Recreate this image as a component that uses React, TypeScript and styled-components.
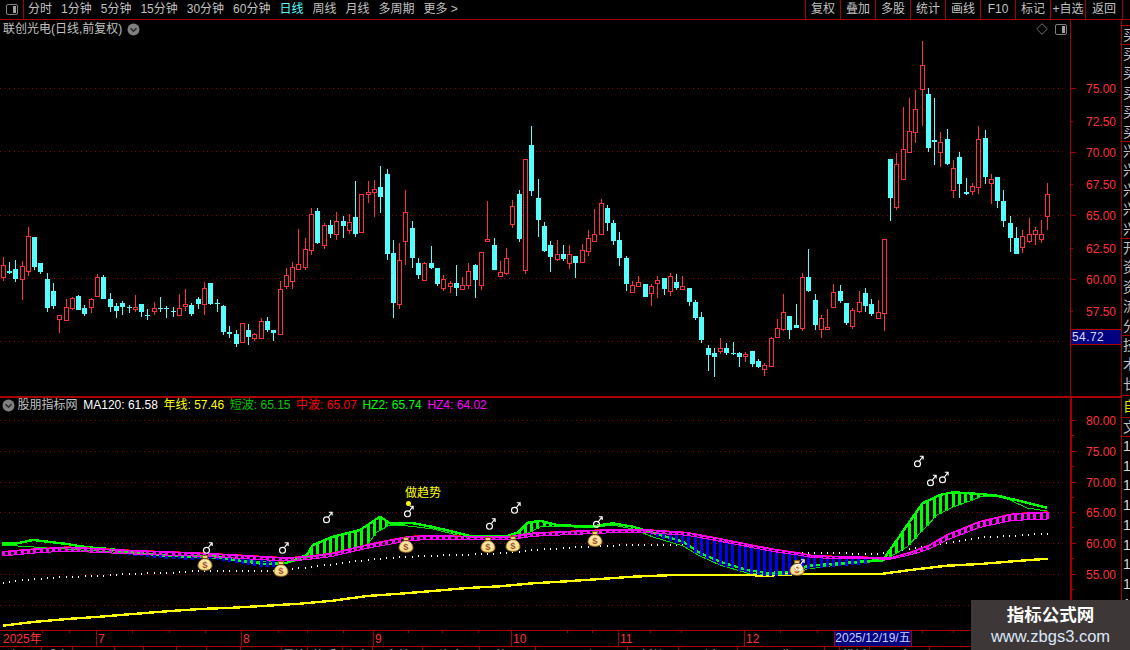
import React from "react";
import styled, { createGlobalStyle } from "styled-components";

const LINE = "#a80000";
const GRID = "#8c0000";
const LABEL = "#ff3232";
const CYAN = "#54ffff";
const GREY = "#c0c0c0";

type Pt = [number, number];
type Raw = [number, number, number, number, number, "r" | "c"];

const regionA: Raw[] = [
  [10,141,166,200,212,"r"],[28,156,183,188,192,"c"],[46,150,178,206,216,"c"],[67,153,169,206,270,"r"],[85,51,79,182,197,"r"],[103,81,81,170,180,"c"],[121,159,159,185,192,"c"],[142,189,207,293,305,"c"],[160,219,243,287,297,"c"],[178,316,316,326,369,"r"],[199,267,292,329,329,"r"],[217,262,265,293,299,"r"],[235,255,258,300,300,"c"],[253,285,294,312,318,"c"],[274,264,268,290,309,"r"],[292,192,202,257,257,"r"],[310,195,201,267,267,"c"],[331,249,267,291,305,"c"],[349,279,288,303,324,"c"],[367,273,279,291,315,"c"],[388,285,291,293,309,"c"],[406,255,292,297,305,"r"],[424,282,282,306,321,"c"],[442,297,314,316,330,"c"],[463,276,295,302,315,"r"],[481,261,294,297,306,"c"],[499,288,295,297,324,"c"],[520,291,303,305,321,"c"],[538,252,295,314,314,"r"],[556,237,282,288,303,"r"],[574,279,285,312,318,"c"],[595,261,267,282,297,"c"],[613,216,235,281,315,"r"],[631,219,219,282,285,"c"],[652,267,279,281,306,"c"],[670,285,288,366,375,"c"],[688,348,366,372,384,"c"],[709,360,372,402,411,"c"],[727,339,340,395,399,"r"],[745,342,360,381,405,"c"],[763,369,373,384,393,"r"],[784,324,334,384,384,"r"],[802,321,333,360,366,"c"],[820,360,360,369,393,"c"],[841,213,238,371,371,"r"],[859,174,196,227,237,"r"],[877,156,172,212,237,"r"],[895,57,163,177,180,"r"],[916,84,118,170,180,"r"],[934,-5,12,119,135,"r"],[952,-5,3,99,102,"c"],[973,40,46,104,117,"r"],[991,30,45,72,84,"c"],[1009,6,34,71,90,"r"],[1030,18,33,48,84,"c"],[1048,12,36,60,72,"r"],
];
const regionB: Raw[] = [
  [16,183,291,342,351,"c"],[34,223,223,335,335,"r"],[55,183,217,221,249,"r"],[73,180,208,215,291,"r"],[91,138,201,231,279,"c"],[112,147,162,402,420,"c"],[130,360,399,549,594,"c"],[148,369,421,551,567,"r"],[166,210,277,362,435,"r"],[187,303,324,414,444,"c"],[205,415,429,465,477,"c"],[223,426,430,480,483,"r"],[244,378,429,444,447,"c"],[262,444,444,492,498,"c"],[280,465,478,503,513,"r"],[301,483,490,497,519,"r"],[319,435,489,504,528,"c"],[337,471,496,507,510,"r"],[355,430,454,494,507,"r"],[376,432,435,480,534,"c"],[394,396,397,494,510,"r"],[412,243,357,362,362,"r"],[433,354,375,450,450,"c"],[451,423,457,467,471,"r"],[469,384,415,459,465,"r"],[487,240,259,311,324,"r"],[508,210,222,357,366,"c"],[526,118,118,451,462,"r"],[544,18,75,213,228,"c"],[565,178,234,300,351,"c"],[583,306,318,393,396,"c"],[601,363,375,411,456,"c"],[622,360,403,416,423,"r"],[640,375,402,417,423,"c"],[658,375,403,429,447,"r"],[676,408,408,429,474,"c"],[697,372,391,425,425,"r"],[715,330,355,392,408,"r"],[733,267,343,362,362,"r"],[754,237,250,341,341,"r"],[772,255,264,309,333,"c"],[790,300,309,363,375,"c"],[808,336,360,414,438,"c"],[829,408,414,492,513,"c"],[847,483,496,516,519,"r"],[865,468,487,498,501,"r"],[886,492,492,531,531,"c"],[904,492,498,518,558,"r"],[922,468,480,488,534,"r"],[943,474,474,507,525,"c"],[961,459,469,513,528,"r"],[979,462,486,504,510,"c"],[997,468,499,507,510,"r"],[1018,504,504,546,558,"c"],[1036,540,546,594,600,"c"],
];
const regionC: Raw[] = [
  [35,336,351,420,429,"c"],[55,435,444,465,513,"c"],[73,444,459,471,531,"c"],[91,414,445,453,462,"r"],[109,429,444,459,465,"c"],[130,426,459,463,465,"c"],[148,456,459,471,501,"c"],[166,456,462,468,486,"r"],[187,453,453,492,501,"c"],[205,477,483,501,504,"c"],[223,489,496,507,528,"r"],[244,411,415,497,497,"r"],[262,357,385,410,414,"r"],[280,282,337,387,393,"r"],[298,348,348,390,417,"c"],[319,312,375,384,384,"c"],[337,219,232,383,393,"r"],[355,147,231,273,276,"c"],[376,282,300,375,390,"c"],[394,345,355,386,414,"r"],[412,327,381,386,386,"r"],[430,252,277,320,320,"r"],[451,255,273,303,309,"c"],[469,309,309,369,375,"c"],[487,324,331,377,387,"r"],[508,273,307,332,339,"r"],[526,264,279,318,336,"c"],[544,297,312,342,348,"c"],[565,300,337,353,353,"r"],[583,117,118,338,393,"r"],
];
const regionD: Raw[] = [
  [61,387,387,504,573,"c"],[79,369,403,530,540,"r"],[100,231,358,446,450,"r"],[118,205,304,365,365,"r"],[136,180,238,305,339,"r"],[157,33,106,176,288,"r"],[175,175,192,354,366,"c"],[193,205,330,335,405,"c"],[211,306,337,365,411,"r"],[232,297,327,402,405,"c"],[250,390,415,479,504,"r"],[268,366,381,462,504,"c"],[289,444,486,492,495,"c"],[307,459,469,483,495,"r"],[325,288,328,470,492,"r"],[346,300,324,441,462,"c"],[364,432,448,458,522,"r"],[382,441,441,513,534,"c"],[400,480,513,573,591,"c"],[421,558,579,624,666,"c"],[439,591,624,672,672,"c"],[457,600,619,651,669,"r"],[478,564,613,633,639,"r"],[496,591,601,611,645,"r"],[514,570,613,627,639,"r"],[532,459,493,557,600,"r"],
];

type Candle = { x: number; hi: number; top: number; bot: number; lo: number; up: boolean };
const toCandles = (raw: Raw[], ox: number, oy: number): Candle[] =>
  raw.map(([zx, h, t, b, l, c]) => ({
    x: Math.floor(ox + zx / 3),
    hi: Math.round(oy + h / 3),
    top: Math.round(oy + t / 3),
    bot: Math.round(oy + b / 3),
    lo: Math.round(oy + l / 3),
    up: c === "r",
  }));
const candles = [
  ...toCandles(regionA, 0, 210),
  ...toCandles(regionB, 350, 120),
  ...toCandles(regionC, 690, 200),
  ...toCandles(regionD, 870, 30),
];

const GREEN_TOP: Pt[] = [[2,543.7],[17,543.3],[33,540],[50,542],[67,544],[87,547.3],[110,549],[133,552.7],[167,555.7],[187,556.7],[213,555.7],[233,560],[267,564.3],[287,562.7],[307,555],[313,545],[333,536.7],[360,530],[380,516.7],[390,523.3],[400,523.5],[412,523],[433,527],[457,532.7],[470,536],[507,536],[518,532.7],[528,522.7],[540,520.7],[557,525],[590,526.7],[613,523.3],[633,526.7],[653,533],[683,541.7],[700,553],[720,561.7],[747,570],[767,573],[797,571.7],[807,566],[830,564],[857,561.7],[883,560],[897,540],[913,516.7],[923,503],[940,495],[953,492.3],[980,494],[997,495.7],[1020,501],[1047,507.7]];
const GREEN_LOW: Pt[] = [[2,545],[287,563],[307,558],[333,553],[367,545],[377,532],[390,525],[400,525],[433,529],[457,535],[470,538],[507,536],[518,535],[528,533],[540,527],[557,526],[590,528],[613,525],[633,529],[653,537],[683,546],[700,556],[720,565],[747,573],[767,575],[797,574],[807,569],[830,566],[857,563],[883,561],[907,547],[923,530],[937,515],[953,507],[970,501],[980,497],[997,496],[1010,500],[1027,508],[1047,511]];
const MAGENTA: Pt[] = [[2,552],[33,549.3],[67,547.3],[100,549],[133,550.7],[167,552],[200,553.3],[233,555],[267,557],[287,558],[307,556.7],[333,553.3],[367,545],[400,538.3],[410,536.7],[433,535.7],[467,536.7],[510,536.7],[533,533.3],[567,531.7],[607,530],[647,530],[687,532.7],[717,538.3],[750,545],[777,550],[800,553.3],[813,556],[863,557.3],[890,558.3],[913,551.7],[930,545],[947,535],[980,521.7],[1013,514],[1048,512.3]];
const BAND: Pt[] = [[0,4],[200,3],[350,3],[400,4],[470,3],[600,3],[800,2],[890,1],[950,5],[1048,7]];
const YELLOW: Pt[] = [[3,625.7],[33,622],[67,619],[100,616.7],[133,614],[167,611.3],[200,609],[233,607.7],[267,605.7],[300,603.7],[333,600.7],[367,596],[400,593.7],[433,591],[467,588],[500,586.3],[533,583.3],[567,581.3],[600,579],[633,576.7],[667,575.3],[700,575],[745,575],[767,575.7],[797,574],[833,574.3],[883,573.7],[913,569.7],[947,565.7],[980,564],[1013,561.3],[1048,558.7]];
const DOTS: Pt[] = [[2,581.7],[33,578],[67,576],[100,574.7],[133,572.7],[167,572],[200,570],[233,570],[267,570],[300,567.3],[333,563.3],[367,558.7],[400,556],[433,554.7],[480,553.3],[510,551.7],[523,550],[567,546.7],[607,544.7],[640,544],[683,544],[780,552],[880,552.7],[913,547.3],[947,541.7],[980,536.7],[1013,534.7],[1047,532.7]];
const BAGS: Pt[] = [[205,563],[281,569],[406,545],[488,545],[513,544],[595,539],[797,568]];
const MARS: Pt[] = [[208,548],[284,548],[328,517.5],[409,511.5],[491,524],[516,508],[598,522],[800,565],[919,461.5],[932,480.5],[944,477.5]];

const at = (pts: Pt[], x: number) => {
  if (x <= pts[0][0]) return pts[0][1];
  for (let i = 1; i < pts.length; i++) {
    if (x <= pts[i][0]) {
      const [x0, y0] = pts[i - 1];
      const [x1, y1] = pts[i];
      return y0 + ((y1 - y0) * (x - x0)) / (x1 - x0);
    }
  }
  return pts[pts.length - 1][1];
};
const BAR_X = Array.from({ length: 167 }, (_, i) => Math.floor(3.3 + 6.29 * i));
const path = (pts: Pt[]) => pts.map(([x, y]) => `${x},${y}`).join(" ");
const bandLow = (x: number) => at(MAGENTA, x) + at(BAND, x);
const MAGENTA_LOW: Pt[] = BAR_X.map((x) => [x, bandLow(x)]);
const inRange = (x: number, r: number[][]) => r.some(([a, b]) => x >= a && x <= b);

const Global = createGlobalStyle`
  html, body { margin: 0; padding: 0; background: #000; }
  body { font-family: "Liberation Sans", "Noto Sans CJK SC", sans-serif; font-size: 12px; color: ${GREY}; }
`;
const Screen = styled.div`
  position: relative;
  width: 1130px;
  height: 650px;
  overflow: hidden;
  background: #000;
  display: flex;
  flex-direction: column;
`;
const Toolbar = styled.div`
  height: 19px;
  border-bottom: 1px solid ${LINE};
  display: flex;
  align-items: center;
  flex: none;
`;
const ToggleCell = styled.div`
  width: 23px;
  height: 19px;
  border-right: 1px solid ${LINE};
  display: flex;
  align-items: center;
  justify-content: center;
  flex: none;
`;
const Periods = styled.div`
  display: flex;
  gap: 9px;
  padding-left: 4px;
  flex: 1;
`;
const Period = styled.span<{ $active?: boolean }>`
  color: ${(p) => (p.$active ? CYAN : GREY)};
  line-height: 19px;
  white-space: nowrap;
`;
const ToolCell = styled.div<{ $w?: number }>`
  width: ${(p) => p.$w ?? 35}px;
  box-sizing: border-box;
  height: 19px;
  border-left: 1px solid ${LINE};
  line-height: 18px;
  text-align: center;
  white-space: nowrap;
  overflow: hidden;
  flex: none;
`;
const ToolEnd = styled.div`
  width: 8px;
  height: 19px;
  border-left: 1px solid ${LINE};
  box-sizing: border-box;
  flex: none;
`;
const Body = styled.div`
  flex: 1;
  display: flex;
  min-height: 0;
`;
const Charts = styled.div`
  width: 1121px;
  flex: none;
  display: flex;
  flex-direction: column;
`;
const Pane = styled.div<{ $h: number; $thick?: boolean }>`
  position: relative;
  height: ${(p) => p.$h}px;
  display: flex;
  flex: none;
  border-bottom: ${(p) => (p.$thick ? `2px solid ${LINE}` : "none")};
`;
const Plot = styled.svg`
  display: block;
  width: 1070px;
  height: 100%;
  flex: none;
`;
const AxisBox = styled.div<{ $b: number }>`
  width: ${(p) => 51 - p.$b}px;
  border-left: ${(p) => p.$b}px solid ${LINE};
  flex: none;
`;
const AxisSvg = styled.svg`
  display: block;
  width: 100%;
  height: 100%;
  font-family: "Liberation Sans", sans-serif;
  font-size: 12px;
`;
const PaneTitle = styled.div`
  position: absolute;
  left: 3px;
  top: 2px;
  display: flex;
  align-items: center;
  gap: 5px;
  line-height: 14px;
`;
const CornerIcons = styled.div`
  position: absolute;
  left: 1036px;
  top: 3px;
  display: flex;
  align-items: center;
  gap: 7px;
`;
const IndicatorTitle = styled.div`
  position: absolute;
  left: 2px;
  top: 0px;
  display: flex;
  align-items: center;
  gap: 5.6px;
  line-height: 14px;
  white-space: nowrap;
`;
const TitleName = styled.span`
  margin-left: -3px;
`;
const Value = styled.span<{ $c: string }>`
  color: ${(p) => p.$c};
`;
const PriceTag = styled.div`
  position: absolute;
  left: 1071px;
  top: 309px;
  width: 50px;
  height: 16px;
  box-sizing: border-box;
  background: #000080;
  border-top: 1px solid ${LINE};
  border-bottom: 1px solid ${LINE};
  color: #d8d8ff;
  line-height: 14px;
  padding-left: 1px;
  letter-spacing: 0.4px;
`;
const TimeAxis = styled.div`
  position: relative;
  height: 15px;
  flex: none;
  display: flex;
  border-top: 1px solid ${LINE};
  border-bottom: 1px solid ${LINE};
`;
const TimeCell = styled.div<{ $w: number; $first?: boolean }>`
  width: ${(p) => p.$w}px;
  box-sizing: border-box;
  flex: none;
  border-left: ${(p) => (p.$first ? "none" : `1px solid ${LINE}`)};
  padding-left: ${(p) => (p.$first ? 3 : 1)}px;
  color: ${LABEL};
  line-height: 16px;
`;
const DateCell = styled.div`
  width: 78px;
  box-sizing: border-box;
  flex: none;
  background: #000080;
  border: 1px solid ${LINE};
  border-top: none;
  border-bottom: none;
  color: #c4d0ff;
  text-align: center;
  line-height: 15px;
  white-space: nowrap;
`;
const TickOverlay = styled.svg`
  position: absolute;
  left: 0;
  top: 0;
  width: 1121px;
  height: 3px;
`;
const TabRow = styled.div`
  flex: 1;
  display: flex;
  overflow: hidden;
`;
const Tab = styled.div<{ $w: number; $c?: string }>`
  width: ${(p) => p.$w}px;
  box-sizing: border-box;
  flex: none;
  height: 20px;
  border-right: 1px solid ${LINE};
  color: ${(p) => p.$c ?? GREY};
  text-align: center;
  line-height: 18px;
  white-space: nowrap;
  overflow: hidden;
`;
const Strip = styled.div`
  flex: 1;
  border-left: 1px solid ${LINE};
  overflow: hidden;
  display: flex;
  flex-direction: column;
`;
const StripBlock = styled.div<{ $h: number }>`
  height: ${(p) => p.$h}px;
  flex: none;
  box-sizing: border-box;
  border-bottom: 1px solid ${LINE};
  padding-left: 1px;
  width: 9px;
  overflow: hidden;
`;
const StripText = styled.div<{ $c?: string; $lh: number }>`
  width: 14px;
  font-size: 14px;
  line-height: ${(p) => p.$lh}px;
  color: ${(p) => p.$c ?? GREY};
  word-break: break-all;
`;
const StripDigits = styled.div`
  flex: 1;
  padding-left: 1px;
  color: #d8d8d8;
  font-size: 14px;
  line-height: 19.7px;
  overflow: hidden;
`;
const Watermark = styled.div`
  position: absolute;
  left: 971px;
  top: 600px;
  width: 159px;
  height: 50px;
  background: #3d3737;
  display: flex;
  flex-direction: column;
  align-items: center;
  padding-top: 6px;
  box-sizing: border-box;
`;
const MarkTitle = styled.div`
  color: #fff;
  font-size: 17.5px;
  font-weight: 700;
  line-height: 19px;
`;
const MarkUrl = styled.div`
  color: #dce7f7;
  font-size: 16.5px;
  line-height: 20px;
  margin-top: 1px;
`;

const Chevron: React.FC = () => (
  <svg width="13" height="13" viewBox="0 0 13 13">
    <circle cx="6.5" cy="6.5" r="6" fill="#808080" />
    <path d="M3.5 5.2 L6.5 8.2 L9.5 5.2" fill="none" stroke="#2a2a2a" strokeWidth="1.6" />
  </svg>
);
const PanelToggle: React.FC = () => (
  <svg width="12" height="11" viewBox="0 0 12 11">
    <rect x="0.5" y="0.5" width="11" height="10" rx="1.5" fill="none" stroke="#808080" />
    <rect x="7" y="2" width="3" height="7" fill="#a0a0a0" />
  </svg>
);
const Diamond: React.FC = () => (
  <svg width="12" height="12" viewBox="0 0 12 12">
    <path d="M6 0.7 L11.3 6 L6 11.3 L0.7 6 Z" fill="none" stroke="#707070" />
  </svg>
);

const CandleMark: React.FC<{ c: Candle }> = ({ c }) => {
  const col = c.up ? LABEL : CYAN;
  const wick = c.x + 0.5;
  return (
    <g>
      <line x1={wick} x2={wick} y1={c.hi} y2={c.top} stroke={col} />
      <line x1={wick} x2={wick} y1={c.bot} y2={c.lo} stroke={col} />
      {c.up ? (
        <rect x={c.x - 2 + 0.5} y={c.top + 0.5} width={4} height={Math.max(c.bot - c.top, 1)} fill="#000" stroke={col} />
      ) : (
        <rect x={c.x - 2} y={c.top} width={5} height={Math.max(c.bot - c.top, 1)} fill={col} />
      )}
    </g>
  );
};

const MoneyBag: React.FC<{ x: number; y: number }> = ({ x, y }) => (
  <g transform={`translate(${x} ${y})`} shapeRendering="auto">
    <path
      d="M-3 -7.5 L3 -7.5 L2 -4.2 C6 -2.5 7.4 1 7 3.6 C6.6 6.6 3 7.4 0 7.4 C-3 7.4 -6.6 6.6 -7 3.6 C-7.4 1 -6 -2.5 -2 -4.2 Z"
      fill="url(#bag)"
      stroke="#8a5a10"
      strokeWidth="0.9"
    />
    <line x1="-2.4" x2="2.4" y1="-4.4" y2="-4.4" stroke="#7a3a10" strokeWidth="1.1" />
    <text y="4.6" textAnchor="middle" fontSize="9.5" fontWeight="700" fontFamily="Liberation Sans, sans-serif" fill="#a8501a">
      $
    </text>
  </g>
);
const Mars: React.FC<{ x: number; y: number }> = ({ x, y }) => (
  <g transform={`translate(${x} ${y}) scale(1.15)`} fill="none" stroke="#fff" shapeRendering="auto" strokeWidth="1">
    <circle cx="-1.3" cy="2" r="2.6" />
    <path d="M0.3 -0.2 L3.4 -4.4 M0.7 -4.6 L3.6 -4.6 L3.6 -1.8" />
  </g>
);

const priceGrid = [88.5, 151.5, 215.5, 278.5, 341.5];
const priceLabels: [string, number, boolean][] = [
  ["75.00", 88, true], ["72.50", 121, false], ["70.00", 152, true], ["67.50", 184, false], ["65.00", 215, true], ["62.50", 248, false], ["60.00", 279, true], ["57.50", 311, false],
];
const subGrid = [420.5, 451.5, 482.5, 512.5, 543.5, 574.5, 605.5];
const subLabels: [string, number][] = [["80.00", 420], ["75.00", 451], ["70.00", 482], ["65.00", 512], ["60.00", 543], ["55.00", 574]];
const timeTicks = [42, 69, 132, 169, 205, 278, 307, 343, 408, 442, 478, 567, 592, 650, 681, 780, 817, 922, 953];
const tabs: [number, string?, string?][] = [
  [42, "主图"], [31, "成交"], [42, "MACD"], [29, "KDJ"], [33, "RSI"], [30, "WR"], [34, "BOLL"], [41, "DMI"], [26, "量比"], [35, "换手"], [30, "主力"], [50, "大单"], [57, "资金"], [56, "筹码"], [92, "两融"], [51, "板块"], [59, "形态"], [87, "公告"], [15, "", undefined], [30, "模板", "#a0e8f0"], [60, "更多"],
];

export default function App() {
  const greenRanges = [[287, 392], [515, 600], [885, 997]];
  const blueRanges = [[115, 274], [650, 870]];
  const redLine: Pt[] = MAGENTA.map(([x, y]) => [x, y - 0.5]);
  return (
    <Screen>
      <Global />
      <Toolbar>
        <ToggleCell>
          <PanelToggle />
        </ToggleCell>
        <Periods>
          {["分时", "1分钟", "5分钟", "15分钟", "30分钟", "60分钟"].map((t) => (
            <Period key={t}>{t}</Period>
          ))}
          <Period $active>日线</Period>
          {["周线", "月线", "多周期", "更多 >"].map((t) => (
            <Period key={t}>{t}</Period>
          ))}
        </Periods>
        {["复权", "叠加", "多股", "统计", "画线", "F10", "标记", "+自选"].map((t) => (
          <ToolCell key={t}>{t}</ToolCell>
        ))}
        <ToolCell $w={37}>返回</ToolCell>
        <ToolEnd />
      </Toolbar>
      <Body>
        <Charts>
          <Pane $h={376} $thick>
            <Plot viewBox="0 20 1070 376" shapeRendering="crispEdges">
              {priceGrid.map((y) => (
                <line key={y} x1="0" x2="1067" y1={y} y2={y} stroke={GRID} strokeDasharray="1 3.5" />
              ))}
              {candles.map((c, i) => (
                <CandleMark key={i} c={c} />
              ))}
            </Plot>
            <AxisBox $b={1}>
              <AxisSvg viewBox="1071 20 50 376">
                {priceLabels.map(([t, y, major]) => (
                  <g key={t}>
                    <line x1="1071" x2={major ? 1076 : 1073} y1={y + 0.5} y2={y + 0.5} stroke={LINE} />
                    <text x="1086" y={y + 4.5} fill={LABEL}>{t}</text>
                  </g>
                ))}
              </AxisSvg>
            </AxisBox>
            <PaneTitle>
              <span>联创光电(日线,前复权)</span>
              <Chevron />
            </PaneTitle>
            <CornerIcons>
              <Diamond />
              <PanelToggle />
            </CornerIcons>
            <PriceTag>54.72</PriceTag>
          </Pane>
          <Pane $h={232}>
            <Plot viewBox="0 398 1070 232" shapeRendering="crispEdges">
              <defs>
                <radialGradient id="bag" cx="50%" cy="55%" r="60%">
                  <stop offset="0%" stopColor="#fff6c8" />
                  <stop offset="70%" stopColor="#f5dc8a" />
                  <stop offset="100%" stopColor="#d8a040" />
                </radialGradient>
              </defs>
              {subGrid.map((y) => (
                <line key={y} x1="0" x2="1067" y1={y} y2={y} stroke={GRID} strokeDasharray="1 3.5" />
              ))}
              <polyline points={path(YELLOW)} fill="none" stroke="#ffff00" strokeWidth="2.4" />
              {BAR_X.map((x) => (
                <rect key={x} x={x} y={Math.round(at(DOTS, x))} width="1" height="2" fill="#fff" />
              ))}
              {BAR_X.filter((x) => inRange(x, greenRanges)).map((x) => (
                <rect key={x} x={x - 1} y={at(GREEN_TOP, x)} width="3" height={Math.max(at(GREEN_LOW, x) - at(GREEN_TOP, x), 0)} fill="#00ff00" />
              ))}
              <polyline points={path(GREEN_LOW)} fill="none" stroke="#00e000" strokeWidth="1" />
              <polyline points={path(GREEN_TOP)} fill="none" stroke="#00ff00" strokeWidth="2.4" />
              {BAR_X.filter((x) => inRange(x, blueRanges)).map((x) => (
                <rect key={x} x={x - 1} y={at(MAGENTA, x)} width="3" height={Math.max(at(GREEN_TOP, x) + 3 - at(MAGENTA, x), 1)} fill="#0000ff" />
              ))}
              <polyline points={path(redLine)} fill="none" stroke="#ff0000" strokeWidth="1" />
              {BAR_X.map((x) => (
                <rect key={x} x={x - 1} y={at(MAGENTA, x)} width="3" height={at(BAND, x)} fill="#ff00ff" />
              ))}
              <polyline points={path(MAGENTA)} fill="none" stroke="#ff00ff" strokeWidth="1.6" />
              <polyline points={path(MAGENTA_LOW)} fill="none" stroke="#ff00ff" strokeWidth="1" />
              {BAGS.map(([x, y]) => (
                <MoneyBag key={x} x={x} y={y} />
              ))}
              {MARS.map(([x, y]) => (
                <Mars key={x} x={x} y={y} />
              ))}
              <circle cx="408.5" cy="503.5" r="2.5" fill="#ffff00" shapeRendering="auto" />
              <text x="405" y="497" fontSize="12" fill="#ffff00" fontFamily="Noto Sans CJK SC, sans-serif">做趋势</text>
            </Plot>
            <AxisBox $b={2}>
              <AxisSvg viewBox="1072 398 49 232">
                {subLabels.map(([t, y]) => (
                  <g key={t}>
                    <line x1="1072" x2="1076" y1={y + 0.5} y2={y + 0.5} stroke={LINE} />
                    <line x1="1072" x2="1074" y1={y + 15.5} y2={y + 15.5} stroke={LINE} />
                    <text x="1086" y={y + 4.5} fill={LABEL}>{t}</text>
                  </g>
                ))}
              </AxisSvg>
            </AxisBox>
            <IndicatorTitle>
              <Chevron />
              <TitleName>股朋指标网</TitleName>
              <Value $c="#fff">MA120: 61.58</Value>
              <Value $c="#ffff00">年线: 57.46</Value>
              <Value $c="#00c800">短波: 65.15</Value>
              <Value $c="#ff0000">中波: 65.07</Value>
              <Value $c="#00ff00">HZ2: 65.74</Value>
              <Value $c="#ff00ff">HZ4: 64.02</Value>
            </IndicatorTitle>
          </Pane>
          <TimeAxis>
            <TimeCell $w={96} $first>2025年</TimeCell>
            <TimeCell $w={145}>7</TimeCell>
            <TimeCell $w={132}>8</TimeCell>
            <TimeCell $w={138}>9</TimeCell>
            <TimeCell $w={107}>10</TimeCell>
            <TimeCell $w={126}>11</TimeCell>
            <TimeCell $w={90}>12</TimeCell>
            <DateCell>2025/12/19/五</DateCell>
            <TickOverlay viewBox="0 0 1121 3" shapeRendering="crispEdges">
              {timeTicks.map((x) => (
                <line key={x} x1={x + 0.5} x2={x + 0.5} y1="0" y2="2" stroke={LINE} />
              ))}
            </TickOverlay>
          </TimeAxis>
          <TabRow>
            {tabs.map(([w, t, c], i) => (
              <Tab key={i} $w={w} $c={c}>{t}</Tab>
            ))}
          </TabRow>
        </Charts>
        <Strip>
          <StripBlock $h={6} />
          <StripBlock $h={19}>
            <StripText $lh={19}>买</StripText>
          </StripBlock>
          <StripBlock $h={97}>
            <StripText $lh={19.4}>买买买买买</StripText>
          </StripBlock>
          <StripBlock $h={97}>
            <StripText $lh={19.4}>兴兴兴兴兴</StripText>
          </StripBlock>
          <StripBlock $h={97}>
            <StripText $lh={19.4}>开资资流分</StripText>
          </StripBlock>
          <StripBlock $h={60}>
            <StripText $lh={19.4}>技术长</StripText>
          </StripBlock>
          <StripBlock $h={22}>
            <StripText $lh={20} $c="#e0e000">自</StripText>
          </StripBlock>
          <StripBlock $h={19}>
            <StripText $lh={18}>文</StripText>
          </StripBlock>
          <StripDigits>
            1<br />1<br />1<br />1<br />1<br />1<br />1<br />1<br />1<br />1
          </StripDigits>
        </Strip>
      </Body>
      <Watermark>
        <MarkTitle>指标公式网</MarkTitle>
        <MarkUrl>www.zbgs3.com</MarkUrl>
      </Watermark>
    </Screen>
  );
}
